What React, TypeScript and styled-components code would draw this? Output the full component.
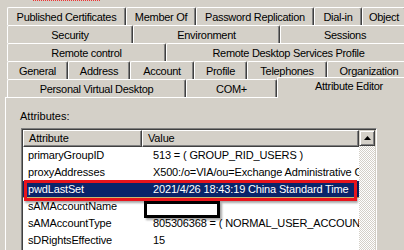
import styled, { createGlobalStyle } from "styled-components";

const GlobalStyle = createGlobalStyle`
  html, body {
    margin: 0;
    padding: 0;
    background: #d4d0c8;
    overflow: hidden;
  }
  body {
    font-family: Tahoma, "Liberation Sans", Arial, sans-serif;
    font-size: 11px;
    color: #000;
  }
`;

const Dialog = styled.div`
  position: relative;
  width: 420px;
  height: 250px;
  padding: 7px 0 0 5px;
  box-sizing: border-box;
  &::before {
    content: "";
    position: absolute;
    left: 33px;
    top: 0;
    width: 67px;
    border-top: 1px dotted #f03030;
  }
`;

const TabStrip = styled.div`
  display: flex;
  flex-direction: column;
  padding-left: 2px;
  letter-spacing: -0.3px;
`;

const TabRow = styled.div`
  display: flex;
  height: 18px;
`;

const Tab = styled.div<{ w: number }>`
  flex: 0 0 ${(p) => p.w}px;
  box-sizing: border-box;
  height: 18px;
  display: flex;
  align-items: center;
  justify-content: center;
  white-space: nowrap;
  background: #d4d0c8;
  border-top: 1px solid #fff;
  border-left: 1px solid #fff;
  border-right: 1px solid #404040;
  border-radius: 2px 2px 0 0;
  box-shadow: inset -1px 0 0 #808080;
`;

const ActiveTab = styled.div`
  position: relative;
  z-index: 2;
  flex: 1 0 auto;
  box-sizing: border-box;
  height: 21px;
  margin: -2px 0 -1px 0;
  display: flex;
  align-items: flex-start;
  justify-content: center;
  padding-top: 2px;
  background: #d4d0c8;
  border-top: 1px solid #fff;
  border-left: 1px solid #fff;
  border-radius: 2px 2px 0 0;
`;

const Panel = styled.div`
  border-top: 1px solid #fff;
  border-left: 1px solid #fff;
  padding: 11px 0 0 15px;
  height: 200px;
`;

const Label = styled.div`
  margin-left: -1px;
  height: 14px;
  line-height: 14px;
  margin-bottom: 5px;
`;

const ListBox = styled.div`
  width: 356px;
  height: 140px;
  box-sizing: border-box;
  border-top: 1px solid #808080;
  border-left: 1px solid #808080;
  border-right: 1px solid #fff;
  border-bottom: 1px solid #fff;
  box-shadow: inset 1px 1px 0 #404040, inset -1px -1px 0 #d4d0c8;
  padding: 1px;
  display: flex;
  background: #fff;
  letter-spacing: -0.15px;
`;

const ListBody = styled.div`
  flex: 1;
  display: flex;
  flex-direction: column;
  overflow: hidden;
`;

const HeaderRow = styled.div`
  display: flex;
  height: 17px;
`;

const HeaderCell = styled.div<{ w: number }>`
  flex: 0 0 ${(p) => p.w}px;
  box-sizing: border-box;
  background: #d4d0c8;
  border-top: 1px solid #fff;
  border-left: 1px solid #fff;
  border-right: 1px solid #404040;
  border-bottom: 1px solid #404040;
  box-shadow: inset -1px -1px 0 #808080;
  padding-left: 5px;
  line-height: 15px;
  white-space: nowrap;
`;

const Row = styled.div<{ selected?: boolean }>`
  position: relative;
  display: flex;
  height: 17px;
  line-height: 17px;
  white-space: nowrap;
  background: ${(p) => (p.selected ? "#0a246a" : "transparent")};
  color: ${(p) => (p.selected ? "#fff" : "#000")};
  box-shadow: ${(p) => (p.selected ? "inset 0 -1px 0 #c8b870" : "none")};
`;

const Cell = styled.div<{ w?: number }>`
  flex: ${(p) => (p.w ? `0 0 ${p.w}px` : "1")};
  padding-left: ${(p) => (p.w ? 5 : 6)}px;
  overflow: hidden;
  position: relative;
`;

const Highlight = styled.div`
  position: absolute;
  left: 1px;
  top: -1px;
  width: 333px;
  height: 21px;
  box-sizing: border-box;
  border: 3px solid #e8141c;
  box-shadow: 1px 2px 2px rgba(0, 0, 0, 0.35);
  pointer-events: none;
`;

const Redaction = styled.div`
  position: absolute;
  left: 121px;
  top: 3px;
  width: 76px;
  height: 17px;
  box-sizing: border-box;
  border: 3px solid #000;
  background: #fff;
  box-shadow: 2px 2px 2px rgba(0, 0, 0, 0.35);
  z-index: 3;
`;

const ScrollBar = styled.div`
  flex: 0 0 16px;
  display: flex;
  flex-direction: column;
  background: repeating-conic-gradient(#d4d0c8 0 25%, #fff 0 50%) 0 0 / 2px 2px;
`;

const ScrollButton = styled.div`
  height: 16px;
  box-sizing: border-box;
  background: #d4d0c8;
  border-top: 1px solid #d4d0c8;
  border-left: 1px solid #d4d0c8;
  border-right: 1px solid #404040;
  border-bottom: 1px solid #404040;
  box-shadow: inset 1px 1px 0 #fff, inset -1px -1px 0 #808080;
  display: flex;
  align-items: center;
  justify-content: center;
`;

const tabRows: { label: string; w: number }[][] = [
  [
    { label: "Published Certificates", w: 119 },
    { label: "Member Of", w: 70 },
    { label: "Password Replication", w: 118 },
    { label: "Dial-in", w: 48 },
    { label: "Object", w: 44 },
  ],
  [
    { label: "Security", w: 126 },
    { label: "Environment", w: 147 },
    { label: "Sessions", w: 130 },
  ],
  [
    { label: "Remote control", w: 159 },
    { label: "Remote Desktop Services Profile", w: 245 },
  ],
  [
    { label: "General", w: 61 },
    { label: "Address", w: 62 },
    { label: "Account", w: 64 },
    { label: "Profile", w: 53 },
    { label: "Telephones", w: 80 },
    { label: "Organization", w: 84 },
  ],
];

const attributes = [
  { name: "primaryGroupID", value: "513 = ( GROUP_RID_USERS )" },
  { name: "proxyAddresses", value: "X500:/o=VIA/ou=Exchange Administrative Group (FYDIBOHF23SPDLT)" },
  { name: "pwdLastSet", value: "2021/4/26 18:43:19 China Standard Time", selected: true },
  { name: "sAMAccountName", value: "", hidden: true },
  { name: "sAMAccountType", value: "805306368 = ( NORMAL_USER_ACCOUNT )" },
  { name: "sDRightsEffective", value: "15" },
];

export default function App() {
  return (
    <>
      <GlobalStyle />
      <Dialog>
        <TabStrip>
          {tabRows.map((row, i) => (
            <TabRow key={i}>
              {row.map((t) => (
                <Tab key={t.label} w={t.w}>
                  {t.label}
                </Tab>
              ))}
            </TabRow>
          ))}
          <TabRow>
            <Tab w={179}>Personal Virtual Desktop</Tab>
            <Tab w={91}>COM+</Tab>
            <ActiveTab>Attribute Editor</ActiveTab>
          </TabRow>
        </TabStrip>
        <Panel>
          <Label>Attributes:</Label>
          <ListBox>
            <ListBody>
              <HeaderRow>
                <HeaderCell w={119}>Attribute</HeaderCell>
                <HeaderCell w={217}>Value</HeaderCell>
              </HeaderRow>
              {attributes.map((a) => (
                <Row key={a.name} selected={a.selected}>
                  <Cell w={119}>{a.name}</Cell>
                  <Cell>{a.value}</Cell>
                  {a.selected && <Highlight />}
                  {a.hidden && <Redaction />}
                </Row>
              ))}
            </ListBody>
            <ScrollBar>
              <ScrollButton>
                <svg width="7" height="4" viewBox="0 0 7 4">
                  <path d="M3.5 0 L7 4 L0 4 Z" fill="#000" />
                </svg>
              </ScrollButton>
            </ScrollBar>
          </ListBox>
        </Panel>
      </Dialog>
    </>
  );
}
